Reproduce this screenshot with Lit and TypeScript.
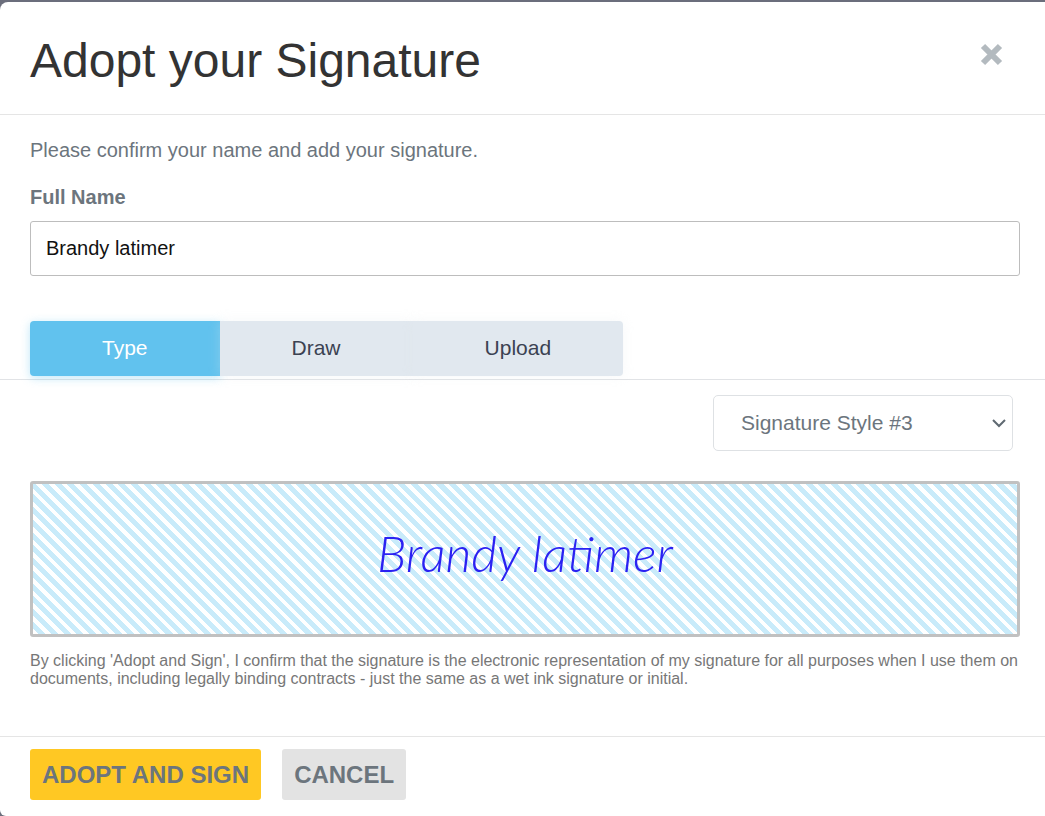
import { LitElement, html, css } from "lit";
import { customElement, state } from "lit/decorators.js";

const TABS = ["Type", "Draw", "Upload"];
const STYLES = [1, 2, 3, 4, 5];

@customElement("app-root")
export class AppRoot extends LitElement {
  @state() private name = "Brandy latimer";
  @state() private tab = "Type";

  static styles = css`
    :host {
      display: block;
      box-sizing: border-box;
      min-height: 100vh;
      padding-top: 2px;
      background: #6b6e7c;
      font-family: "Liberation Sans", Arial, sans-serif;
      font-size: 20px;
      line-height: 24px;
      color: #6c757d;
    }
    * {
      box-sizing: border-box;
    }
    button,
    input,
    select {
      font: inherit;
      margin: 0;
    }
    .dialog {
      display: flex;
      flex-direction: column;
      min-height: calc(100vh - 2px);
      background: #fff;
      border-radius: 8px 0 0 6px;
    }
    .header {
      display: flex;
      justify-content: space-between;
      align-items: flex-start;
      padding: 28px 40px 22px 30px;
      border-bottom: 1px solid #e5e5e5;
    }
    .title {
      margin: 0;
      font-size: 48px;
      line-height: 62px;
      font-weight: 400;
      color: #333;
    }
    .close {
      display: flex;
      padding: 12px 0;
      border: 0;
      background: none;
      cursor: pointer;
    }
    .intro {
      padding: 23px 25px 0 30px;
    }
    .lead {
      margin: 0 0 23px;
    }
    .label {
      display: block;
      margin-bottom: 12px;
      font-weight: 700;
    }
    .name {
      display: block;
      width: 100%;
      height: 55px;
      padding: 0 15px;
      border: 1px solid #bdbdbd;
      border-radius: 3px;
      background: #fff;
      color: #111;
    }
    .tabs {
      display: flex;
      margin-top: 45px;
      padding: 0 30px 3px;
      border-bottom: 1px solid #e1e3e6;
    }
    .tab {
      height: 55px;
      padding: 0 72px 2px;
      border: 0;
      background: #e1e8ef;
      color: #3b4252;
      font-size: 21px;
      box-shadow: 0 0 12px rgba(225, 232, 236, 0.3);
      cursor: pointer;
    }
    .tab:first-child {
      border-radius: 4px 0 0 4px;
    }
    .tab:last-child {
      border-radius: 0 4px 4px 0;
    }
    .tab.active {
      background: #61c2ee;
      color: #fff;
      box-shadow: 0 2px 10px rgba(97, 194, 238, 0.4);
    }
    .panel {
      display: flex;
      flex-direction: column;
      padding: 15px 25px 48px 30px;
    }
    .picker {
      position: relative;
      align-self: flex-end;
      width: 300px;
      margin: 0 7px 30px 0;
    }
    .style {
      display: block;
      appearance: none;
      width: 100%;
      height: 56px;
      padding: 0 40px 0 27px;
      border: 1px solid #dee1e4;
      border-radius: 5px;
      background: #fff;
      color: #6c757d;
      font-size: 21px;
    }
    .chevron {
      position: absolute;
      right: 7px;
      top: 23px;
      pointer-events: none;
    }
    .preview {
      display: flex;
      align-items: center;
      justify-content: center;
      height: 156px;
      padding-bottom: 12px;
      border: 3px solid #c1c1c1;
      border-radius: 3px;
      background: repeating-linear-gradient(45deg, #fff 0 4px, #c9ebfa 4px 9px);
      font-family: Lato, "Liberation Sans", cursive;
      font-size: 50px;
      line-height: 60px;
      font-style: italic;
      font-weight: 300;
      color: #2b22f2;
    }
    .legal {
      margin: 15px 0 0;
      font-size: 16px;
      line-height: 18px;
      color: #777;
    }
    .footer {
      display: flex;
      gap: 21px;
      padding: 12px 30px 16px;
      border-top: 1px solid #e5e5e5;
    }
    .action {
      height: 51px;
      padding: 0 12px;
      border: 0;
      border-radius: 3px;
      background: #e3e3e3;
      color: #6c757d;
      font-size: 24px;
      font-weight: 700;
      text-transform: uppercase;
      cursor: pointer;
    }
    .action.primary {
      background: #ffc823;
    }
  `;

  render() {
    return html`
      <main class="dialog" role="dialog" aria-labelledby="title">
        <header class="header">
          <h1 class="title" id="title">Adopt your Signature</h1>
          <button class="close" aria-label="Close">
            <svg width="26" height="24" viewBox="0 0 26 24">
              <path d="M4 4 21 21M21 4 4 21" fill="none" stroke="#b3babf" stroke-width="6" />
            </svg>
          </button>
        </header>
        <section class="intro">
          <p class="lead">Please confirm your name and add your signature.</p>
          <label class="label" for="name">Full Name</label>
          <input
            class="name"
            id="name"
            type="text"
            .value=${this.name}
            @input=${(e: Event) => (this.name = (e.target as HTMLInputElement).value)}
          />
        </section>
        <div class="tabs" role="tablist">
          ${TABS.map(
            (t) => html`<button
              class="tab ${t === this.tab ? "active" : ""}"
              role="tab"
              aria-selected=${t === this.tab ? "true" : "false"}
              @click=${() => (this.tab = t)}
            >${t}</button>`
          )}
        </div>
        <section class="panel">
          <div class="picker">
            <select class="style" aria-label="Signature style">
              ${STYLES.map((n) => html`<option ?selected=${n === 3}>Signature Style #${n}</option>`)}
            </select>
            <svg class="chevron" width="14" height="10" viewBox="0 0 14 10">
              <path d="M1 2 7 8 13 2" fill="none" stroke="#5f6972" stroke-width="2" />
            </svg>
          </div>
          <div class="preview">${this.name}</div>
          <p class="legal">
            By clicking 'Adopt and Sign', I confirm that the signature is the electronic representation
            of my signature for all purposes when I use them on documents, including legally binding
            contracts - just the same as a wet ink signature or initial.
          </p>
        </section>
        <footer class="footer">
          <button class="action primary">Adopt and Sign</button>
          <button class="action">Cancel</button>
        </footer>
      </main>
    `;
  }
}
